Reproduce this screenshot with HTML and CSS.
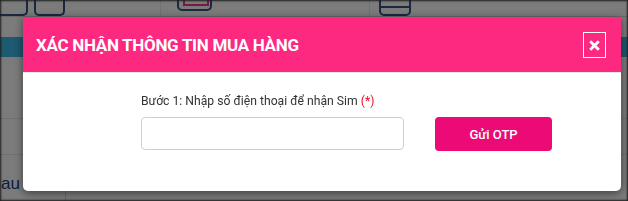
FILE: index.html
```html
<!DOCTYPE html>
<html lang="vi">
<head>
    <meta charset="UTF-8">
    <meta name="viewport" content="width=device-width, initial-scale=1.0">
    <title>Xác nhận thông tin mua hàng</title>
    <link rel="stylesheet" href="styles.css">
</head>
<body>
    <!-- page behind the popup -->
    <div class="page">
        <div class="topbar">
            <div class="tab tab-first">
                <span class="box box-a"></span>
                <span class="box box-b"></span>
            </div>
            <div class="tab tab-mid">
                <span class="box box-c"><span class="box-c-inner"></span></span>
            </div>
            <div class="tab tab-last">
                <span class="box box-d"></span>
            </div>
        </div>
        <div class="band"></div>
        <div class="rows">
            <div class="row"></div>
            <div class="row row-text-holder"><span class="row-text">au</span></div>
            <div class="row row-last"><span class="col-line"></span></div>
        </div>
    </div>

    <div class="overlay">
        <div class="modal">
            <div class="modal-header">
                <h2 class="modal-title">XÁC NHẬN THÔNG TIN MUA HÀNG</h2>
                <button class="close-btn" type="button">
                    <svg width="11" height="11" viewBox="0 0 11 11">
                        <path d="M2.2 2.2 L8.8 8.8 M8.8 2.2 L2.2 8.8" stroke="#fff" stroke-width="2.8" stroke-linecap="square"/>
                    </svg>
                </button>
            </div>
            <div class="modal-body">
                <label class="step-label" for="phone">Bước 1: Nhập số điện thoại để nhận Sim <span class="req">(*)</span></label>
                <input type="text" id="phone" class="phone-input">
                <button class="otp-btn" type="button">Gửi OTP</button>
            </div>
        </div>
    </div>
</body>
</html>
```
FILE: styles.css
```css
html, body {
    margin: 0;
    padding: 0;
    height: 100%;
    overflow: hidden;
}
body {
    font-family: Roboto, "Liberation Sans", sans-serif;
    background-color: #f6f6f6;
}

/* background page */
.page {
    height: 201px;
}
.topbar {
    display: flex;
    height: 16px;
    border-bottom: 1px solid #d4d4d4;
}
.tab {
    position: relative;
    height: 16px;
    border-right: 1px solid #e2e2e2;
}
.tab-first {
    width: 160px;
}
.tab-mid {
    width: 208px;
}
.tab-last {
    flex: 1;
    border-right: none;
}
.box {
    position: absolute;
    border: 2px solid #34527e;
    border-top: none;
    border-radius: 0 0 5px 5px;
    box-sizing: border-box;
}
.box-a {
    left: -4px;
    top: -4px;
    width: 32px;
    height: 20px;
}
.box-b {
    left: 34px;
    top: -4px;
    width: 31px;
    height: 20px;
}
.box-c {
    left: 16px;
    top: -4px;
    width: 35px;
    height: 15px;
}
.box-c-inner {
    position: absolute;
    left: 4px;
    top: 0;
    width: 22px;
    height: 8px;
    border: 2px solid #ff2a8c;
    border-top: none;
}
.box-d {
    left: 9px;
    top: -4px;
    width: 32px;
    height: 20px;
    border-top: 2px solid #34527e;
}
.box-d::after {
    content: "";
    position: absolute;
    left: 0;
    right: 0;
    top: 8px;
    border-top: 2px solid #34527e;
}
.band {
    margin-top: 20px;
    height: 20px;
    background-color: #3ab2de;
}
.rows {
    margin-top: 61px;
}
.row {
    height: 35px;
    border-top: 1px solid #e0e0e0;
}
.row-text-holder {
    padding: 19px 0 0 1px;
    box-sizing: border-box;
}
.row-text {
    display: block;
    font-family: "Liberation Sans", Arial, sans-serif;
    font-size: 17px;
    line-height: 20px;
    color: #1c3c78;
}
.row-last {
    height: 20px;
    border-top: none;
}
.col-line {
    display: block;
    margin-left: 65px;
    height: 20px;
    border-left: 1px solid #d0d0d0;
}

/* popup */
.overlay {
    position: fixed;
    inset: 0;
    background-color: rgba(0, 0, 0, 0.5);
    box-shadow: inset 0 0 2px 1px #1e1e1e;
}
.modal {
    position: absolute;
    left: 23px;
    top: 17px;
    width: 598px;
    background-color: #fff;
    border-radius: 0 0 5px 5px;
    box-shadow: 0 2px 8px rgba(0, 0, 0, 0.5);
}
.modal-header {
    display: flex;
    align-items: center;
    justify-content: space-between;
    height: 56px;
    padding: 0 15px 0 13px;
    background-color: #fd287f;
    border-bottom: 1px solid #e8e8e8;
    box-sizing: border-box;
}
.modal-title {
    margin: 0;
    font-size: 17px;
    font-weight: 700;
    color: #fff;
    letter-spacing: -0.3px;
}
.close-btn {
    display: flex;
    align-items: center;
    justify-content: center;
    width: 23px;
    height: 26px;
    padding: 0;
    margin-top: 1px;
    background: none;
    border: 1px solid #fff;
    cursor: pointer;
}
.modal-body {
    display: grid;
    grid-template-columns: 263px 117px;
    column-gap: 31px;
    row-gap: 7px;
    align-items: start;
    padding: 20px 0 40px 118px;
}
.step-label {
    grid-column: 1 / 3;
    font-size: 12.2px;
    line-height: 17px;
    color: #333;
}
.req {
    color: #e8101a;
}
.phone-input {
    width: 263px;
    height: 33px;
    box-sizing: border-box;
    border: 1px solid #cfcfcf;
    border-radius: 4px;
    padding: 6px 10px;
}
.otp-btn {
    height: 34px;
    background-color: #ec0a76;
    color: #fff;
    border: none;
    border-radius: 4px;
    font-family: Roboto, "Liberation Sans", sans-serif;
    font-size: 13px;
    font-weight: 500;
    cursor: pointer;
}
```
